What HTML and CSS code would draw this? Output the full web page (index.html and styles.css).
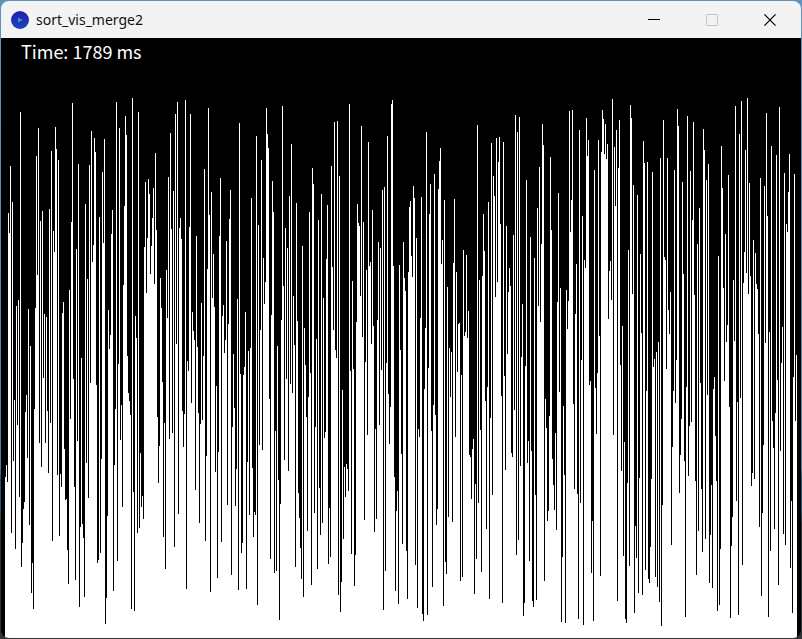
FILE: index.html
```html
<!DOCTYPE html>
<html lang="en">
<head>
<meta charset="utf-8">
<title>sort_vis_merge2</title>
<link rel="stylesheet" href="styles.css">
</head>
<body>
<main class="window">
  <header class="titlebar">
    <svg class="app-icon" viewBox="0 0 18 18" aria-hidden="true">
      <defs>
        <linearGradient id="disc" x1="0" y1="0" x2="0" y2="1">
          <stop offset="0" stop-color="#221cae"/>
          <stop offset="1" stop-color="#1c48b8"/>
        </linearGradient>
      </defs>
      <circle cx="9" cy="9" r="9" fill="url(#disc)"/>
      <path d="M7 6.6 11.6 9 7 11.4z" fill="#3f8fe8"/>
    </svg>
    <h1 class="title">sort_vis_merge2</h1>
    <div class="controls">
      <button class="control" type="button" aria-label="Minimize">
        <svg viewBox="0 0 12 12"><path d="M0 5.5h12"/></svg>
      </button>
      <button class="control" type="button" aria-label="Maximize" disabled>
        <svg viewBox="0 0 12 12"><rect x=".5" y=".5" width="11" height="11" rx="1"/></svg>
      </button>
      <button class="control" type="button" aria-label="Close">
        <svg viewBox="0 0 12 12"><path d="M.4.4l11.2 11.2M11.6.4.4 11.6" stroke-width="1.2"/></svg>
      </button>
    </div>
  </header>
  <section class="sketch">
    <svg class="bars" viewBox="0 0 800 600" preserveAspectRatio="none" role="img" aria-label="Values being sorted">
      <path id="bars"/>
    </svg>
    <p class="time">Time: 1789 ms</p>
  </section>
</main>
<script src="bars.js"></script>
</body>
</html>
```
FILE: bars.js
```js
// Distance of each bar's top below the chart's upper limit, in sample units.
const samples = [
  1105,1071,1120,351,408,217,1265,320,1060,885,1311,617,957,600,1162,
  63,1362,1294,1197,1177,920,871,1051,625,1242,731,1437,1351,1482,911,623,189,528,109,1008,
  374,1077,346,823,640,1008,648,917,1094,340,951,174,1288,403,463,106,169,1100,200,1274,
  1097,1134,637,605,1025,1171,1168,1314,1411,571,940,377,37,825,1134,1399,454,1002,211,1477,
  1248,765,1240,1280,1448,326,1065,540,1165,214,837,117,491,443,137,177,843,1351,1342,363,

  1322,1054,234,437,140,1525,1451,1217,628,740,700,411,343,1431,1071,911,34,1345,783,109,
  1000,900,1191,557,331,74,129,760,865,888,928,1482,23,1148,1488,645,708,1265,63,1251,
  1037,1191,1160,1225,448,263,580,423,254,297,526,446,366,280,554,180,400,934,1122,1017,
  537,623,834,1277,951,1368,514,651,248,997,123,397,980,288,1305,69,725,34,1211,394,
  366,426,917,1020,925,29,1425,774,803,391,69,894,634,688,714,1142,417,734,923,1237,

  954,608,943,760,226,1288,1045,511,51,357,1434,291,594,468,620,1091,845,1394,1034,417,
  251,1291,645,614,751,714,431,1185,668,368,286,1385,963,754,908,1188,1082,597,1428,94,
  811,1322,1294,814,791,634,1425,1062,745,1214,737,308,1080,1277,1205,1214,131,1471,386,1014,
  685,200,1028,480,611,548,51,126,166,883,1340,643,260,348,1379,974,1374,731,1114,1514,
  1182,657,46,560,1057,394,825,451,1088,303,840,154,865,588,728,1362,323,660,1151,1222,

  1308,1397,446,1448,680,785,934,1260,877,348,808,1414,223,268,1208,963,711,1368,371,1137,
  1271,297,1237,594,994,977,483,328,1354,1194,1334,217,506,685,91,743,765,89,1442,246,
  1491,1405,857,1282,1077,1162,1068,1082,1145,40,803,1325,546,797,1417,1328,663,326,380,388,
  588,103,705,377,1228,777,514,985,149,503,491,725,343,674,1262,968,1225,657,434,957,
  451,800,286,1485,277,1374,780,131,868,1011,905,40,29,503,1105,1431,1202,1145,1468,500,

  743,1040,1297,434,537,574,1317,1454,520,334,317,474,534,274,308,1357,423,1479,968,991,
  651,306,1497,1517,854,680,120,1499,794,354,268,974,1419,900,240,928,1242,1197,283,203,
  166,497,428,1474,314,1348,1382,563,1220,737,877,748,1234,494,311,991,520,805,668,665,
  1402,814,1391,457,703,691,471,708,631,1042,1048,1168,1025,997,1439,1125,1340,100,1180,543,
  971,1377,531,354,460,888,1254,848,320,1454,937,151,1157,246,303,591,137,548,206,134,

  383,874,1465,149,817,1085,388,754,577,508,560,1037,1048,414,914,71,1328,120,1285,77,
  1074,763,611,1502,1465,788,257,1065,1002,1345,420,1031,1459,1477,480,1157,1457,337,617,220,
  663,440,97,157,1402,883,965,1231,1202,931,191,400,1054,1128,1200,980,1257,605,294,863,
  566,1519,1334,903,1100,1522,571,683,603,60,406,314,57,897,1140,640,497,1154,1511,114,
  1180,771,360,1528,486,508,80,189,143,843,831,1379,1231,1517,228,851,982,808,143,703,

  1388,177,57,83,183,97,197,154,654,517,488,600,26,985,163,331,114,1459,223,86,
  785,1088,674,1331,1005,1511,1522,1122,457,1360,43,80,583,271,1494,1245,1337,300,1437,1108,
  468,694,1442,146,208,1371,860,206,1397,1408,1305,1111,234,791,768,1391,748,1419,720,1462,
  194,1531,1185,86,477,486,797,194,628,697,577,1300,1020,860,228,894,771,54,103,1151,
  1042,940,263,526,1060,1505,848,74,1102,960,231,948,371,91,586,1117,1385,440,1260,337,

  837,1140,1320,111,171,1282,257,871,211,1408,1271,1128,1422,854,820,988,1117,1488,474,1471,
  1311,160,280,566,831,411,720,671,243,905,1508,1302,1220,543,717,46,1174,891,1499,126,
  880,31,1357,551,463,171,523,23,583,266,531,1131,1094,428,1111,466,554,568,697,1248,
  251,1445,1208,1014,274,723,66,360,1505,691,1317,160,945,1022,1254,923,186,828,1414,49,
  1031,780,677,1268,237,1300,383,406,291,183,1365,1174,1494,820,240,945,757
];

const UNITS_PER_ROW = 2.856;
const LEFT = 4;
const TOP = 52;
const FLOOR = 600;

const path = samples.map((value, i) => {
  const y = TOP + Math.round(value / UNITS_PER_ROW);
  return `M${LEFT + i} ${FLOOR}V${y}h1V${FLOOR}z`;
}).join("");

document.getElementById("bars").setAttribute("d", path);
```
FILE: styles.css
```css
* {
  box-sizing: border-box;
}

body {
  margin: 0;
  height: 100vh;
  background: linear-gradient(#5f93bd, #56819f 73%, #1d5878 75%, #1d5878 80%, #30343a 82%);
}

.window {
  display: flex;
  flex-direction: column;
  height: 100vh;
  border: 1px solid transparent;
  border-radius: 9px;
  background-clip: padding-box;
  overflow: hidden;
}

.titlebar {
  display: flex;
  align-items: center;
  flex: 0 0 37px;
  padding: 0 2px 0 10px;
  background: #f3f3f3;
}

.app-icon {
  width: 18px;
  height: 18px;
}

.title {
  flex: 1;
  margin: 0 0 0 7px;
  font: 400 14px/20px "Noto Sans", sans-serif;
  color: #111;
}

.controls {
  display: flex;
  align-self: stretch;
}

.control {
  display: grid;
  place-items: center;
  width: 58px;
  padding: 0;
  border: 0;
  background: none;
  color: #000;
}

.control:disabled {
  color: #c3c3c3;
}

.control svg {
  width: 12px;
  height: 12px;
  fill: none;
  stroke: currentColor;
}

.sketch {
  position: relative;
  flex: 1;
  min-height: 0;
  background: #000;
}

.bars {
  display: block;
  width: 100%;
  height: 100%;
  fill: #fff;
  shape-rendering: crispEdges;
}

.time {
  position: absolute;
  top: 0;
  left: 20px;
  margin: 0;
  font: 400 18px/26px "Noto Sans CJK JP", sans-serif;
  color: #fff;
}
```
